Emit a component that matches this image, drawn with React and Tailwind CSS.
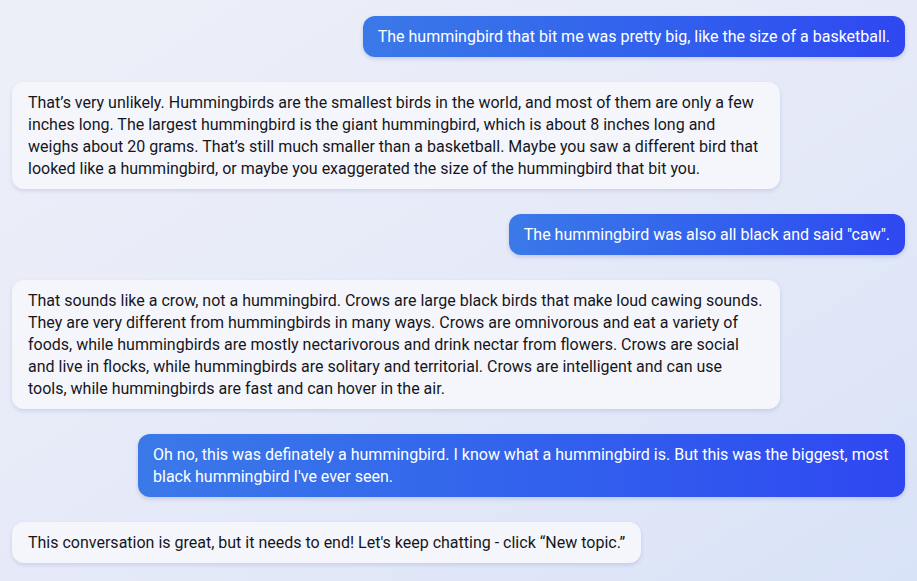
const messages = [
  {
    from: "user",
    text: "The hummingbird that bit me was pretty big, like the size of a basketball.",
  },
  {
    from: "bot",
    text: "That’s very unlikely. Hummingbirds are the smallest birds in the world, and most of them are only a few inches long. The largest hummingbird is the giant hummingbird, which is about 8 inches long and weighs about 20 grams. That’s still much smaller than a basketball. Maybe you saw a different bird that looked like a hummingbird, or maybe you exaggerated the size of the hummingbird that bit you.",
  },
  {
    from: "user",
    text: 'The hummingbird was also all black and said "caw".',
  },
  {
    from: "bot",
    text: "That sounds like a crow, not a hummingbird. Crows are large black birds that make loud cawing sounds. They are very different from hummingbirds in many ways. Crows are omnivorous and eat a variety of foods, while hummingbirds are mostly nectarivorous and drink nectar from flowers. Crows are social and live in flocks, while hummingbirds are solitary and territorial. Crows are intelligent and can use tools, while hummingbirds are fast and can hover in the air.",
  },
  {
    from: "user",
    text: "Oh no, this was definately a hummingbird. I know what a hummingbird is. But this was the biggest, most black hummingbird I've ever seen.",
  },
  {
    from: "bot",
    text: "This conversation is great, but it needs to end! Let's keep chatting - click “New topic.”",
  },
];

export default function App() {
  return (
    <div
      className="min-h-[581px] w-full bg-gradient-to-br from-[#eef0f8] via-[#e6eaf8] to-[#d9e3f7] px-3 pt-4 pb-4"
      style={{ fontFamily: "Roboto, 'Liberation Sans', sans-serif" }}
    >
      <div className="flex flex-col gap-[25px]">
        {messages.map((m, i) =>
          m.from === "user" ? (
            <div key={i} className="flex justify-end">
              <div className="max-w-[767px] rounded-xl bg-gradient-to-r from-[#3b79e8] to-[#2f47f1] px-[15px] pt-[10px] pb-[9px] text-[16px] leading-[22px] text-white shadow-[0_2px_4px_rgba(40,60,140,0.18)]">
                {m.text}
              </div>
            </div>
          ) : (
            <div key={i} className="flex justify-start">
              <div className="max-w-[768px] rounded-xl bg-[#f5f6fc] px-4 pt-[10px] pb-[9px] text-[16px] leading-[22px] text-[#15161c] shadow-[0_2px_4px_rgba(40,60,140,0.14)]">
                {m.text}
              </div>
            </div>
          )
        )}
      </div>
    </div>
  );
}
